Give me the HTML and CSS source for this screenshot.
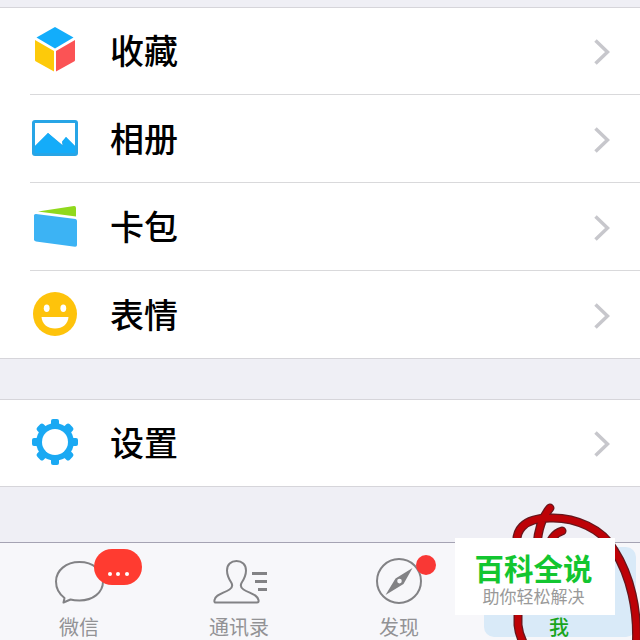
FILE: index.html
```html
<!DOCTYPE html>
<html lang="zh-CN">
<head>
<meta charset="utf-8">
<title>我</title>
<link rel="stylesheet" href="styles.css">
</head>
<body>
<main class="screen">
  <section class="group">
    <div class="row">
      <svg class="icon" viewBox="0 0 50 50"><path fill="#12adfb" d="M25 2 43.500 12.500 25 23.500 6.500 12.500Z"/><path fill="#fdca0a" d="M5 15 24 26V46.500L6 36.500Q5 36 5 35Z"/><path fill="#fb5355" d="M45 15 26 26V46.500L44 36.500Q45 36 45 35Z"/></svg>
      <span class="label">收藏</span>
      <svg class="chevron" viewBox="0 0 16 26"><path d="M1.500 1.500 13.500 13 1.500 24.500"/></svg>
    </div>
    <div class="row">
      <svg class="icon" viewBox="0 0 50 50"><rect x="2" y="7" width="46" height="36" rx="3" fill="#27a5e6"/><path fill="#fff" d="M5 10H45V33L36 24 32 29.500 32.500 32 18 20 5 33Z"/><path fill="#14acf9" d="M5 33 18 20 32 32.500 32.500 34 33.500 31 32 28.500 36 24 45 33V40H5Z"/></svg>
      <span class="label">相册</span>
      <svg class="chevron" viewBox="0 0 16 26"><path d="M1.500 1.500 13.500 13 1.500 24.500"/></svg>
    </div>
    <div class="row">
      <svg class="icon" viewBox="0 0 50 50"><path fill="#90d91c" d="M8 10.500 44 5Q46 4.800 46 7V15.500Z"/><path fill="#3cb3f4" d="M6 13 45.500 18Q47 18.300 47 20V44Q47 46 45 45.800L6 40.500Q4 40 4 38.500V14.500Q4 12.800 6 13Z"/></svg>
      <span class="label">卡包</span>
      <svg class="chevron" viewBox="0 0 16 26"><path d="M1.500 1.500 13.500 13 1.500 24.500"/></svg>
    </div>
    <div class="row">
      <svg class="icon" viewBox="0 0 50 50"><circle cx="25" cy="25" r="22" fill="#fec30b"/><ellipse cx="16.700" cy="19.300" rx="2.900" ry="3.700" fill="#fff"/><ellipse cx="33.300" cy="19.300" rx="2.900" ry="3.700" fill="#fff"/><path fill="#fff" d="M11.500 28H38.500C38 35 32.500 39.500 25 39.500S12 35 11.500 28Z"/></svg>
      <span class="label">表情</span>
      <svg class="chevron" viewBox="0 0 16 26"><path d="M1.500 1.500 13.500 13 1.500 24.500"/></svg>
    </div>
  </section>
  <section class="group">
    <div class="row">
      <svg class="icon" viewBox="0 0 50 50"><g fill="#1aa9f3"><rect x="21" y="2" width="8" height="46" rx="2"/><rect x="20.500" y="2" width="9" height="46" rx="2.500" transform="rotate(45 25 25)"/><rect x="21" y="2" width="8" height="46" rx="2" transform="rotate(90 25 25)"/><rect x="20.500" y="2" width="9" height="46" rx="2.500" transform="rotate(135 25 25)"/><circle cx="25" cy="25" r="18.800"/></g><circle cx="25" cy="25" r="13" fill="#fff"/></svg>
      <span class="label">设置</span>
      <svg class="chevron" viewBox="0 0 16 26"><path d="M1.500 1.500 13.500 13 1.500 24.500"/></svg>
    </div>
  </section>
  <nav class="tabs">
    <div class="tab">
      <svg class="tab-icon" viewBox="-1 0 60 60"><path d="M14.500 48Q6 41.500 6 31.500C6 20.500 16 12 29.500 12S53 20.500 53 31.500 43 50.500 29.500 50.500Q24 50.500 20.500 49.500L13.500 52.500Z"/></svg>
      <span class="tab-label">微信</span>
      <span class="badge"><i></i><i></i><i></i></span>
    </div>
    <div class="tab">
      <svg class="tab-icon" viewBox="-1 0 60 60"><path d="M5 52.500H47Q49 52.500 48.500 50C47.500 44.500 40 43.500 33.500 39.500Q29.500 37 31.500 33C34.500 28.500 36 25.500 36 20.500C36 14.500 32 11 26.500 11S17 14.500 17 20.500C17 25.500 18.500 28.500 21.500 33Q23.500 37 19.500 39.500C13 43.500 5.500 44.500 4.500 50Q4 52.500 5.500 52.500Z"/><path class="bars" d="M42 23.500H57M45 31.500H57M48 39.500H57"/></svg>
      <span class="tab-label">通讯录</span>
    </div>
    <div class="tab">
      <svg class="tab-icon" viewBox="-1 0 60 60"><circle cx="29" cy="31" r="22"/><path class="needle" fill-rule="evenodd" d="M42.500 18 33.500 34 15.500 45 25.500 28.500ZM29.500 28.800A2.300 2.300 0 1 0 29.500 33.400 2.300 2.300 0 1 0 29.500 28.800Z"/></svg>
      <span class="tab-label">发现</span>
      <span class="dot"></span>
    </div>
    <div class="tab tab-active">
      <span class="tab-label">我</span>
    </div>
  </nav>
  <svg class="scribble" viewBox="0 0 200 150">
    <path class="ink-edge" d="M97 55C98 42 102 27 110 18M108 61C109 50 115 43 122 41M78 60C73 40 84 28 110 28C135 27 163 39 174 60C190 85 199 120 196 160M78 110V135Q79 145 84 154"/>
    <path class="ink-fill" d="M97 55C98 42 102 27 110 18M108 61C109 50 115 43 122 41M78 60C73 40 84 28 110 28C135 27 163 39 174 60C190 85 199 120 196 160M78 110V135Q79 145 84 154"/>
  </svg>
  <aside class="watermark">
    <strong class="brand">百科全说</strong>
    <span class="slogan">助你轻松解决</span>
  </aside>
</main>
</body>
</html>
```

FILE: styles.css
```css
* { box-sizing: border-box; }
body { margin: 0; font-family: "Noto Sans CJK SC", sans-serif; }
.screen {
  position: relative;
  width: 640px;
  height: 640px;
  padding-top: 7px;
  overflow: hidden;
  background: #efeff5;
  display: flex;
  flex-direction: column;
}
.group {
  flex: none;
  background: #fff;
  border-top: 1px solid #d6d5da;
  border-bottom: 1px solid #d6d5da;
}
.group + .group { margin-top: 40px; }
.row {
  display: flex;
  align-items: center;
  height: 86px;
  margin-left: 30px;
  padding-right: 30px;
}
.row + .row { height: 88px; border-top: 1px solid #d9d9db; }
.icon { width: 50px; height: 50px; flex: none; margin-top: -2px; }
.label {
  flex: 1;
  margin: -2px 0 0 30px;
  font-size: 34px;
  line-height: 50px;
  font-weight: 500;
  color: #000;
}
.chevron { width: 16px; height: 26px; fill: none; stroke: #c7c7cc; stroke-width: 3.500; margin-top: 2px; }
.tabs {
  display: grid;
  grid-template-columns: repeat(4, 160px);
  flex: none;
  height: 98px;
  margin-top: auto;
  border-top: 1px solid #a5a3b3;
  background: #f7f7fa;
}
.tab {
  position: relative;
  display: flex;
  flex-direction: column;
  align-items: center;
  padding-right: 2px;
}
.tab-icon { width: 60px; height: 60px; margin-top: 7px; fill: none; stroke: #828285; stroke-width: 2; stroke-linejoin: round; }
.tab-icon .bars { stroke-width: 3; }
.tab-icon .needle { fill: #828285; stroke: none; }
.tab-label { font-size: 20px; line-height: 30px; margin-top: 2px; color: #929295; }
.badge {
  position: absolute;
  left: 94px;
  top: 6px;
  width: 48px;
  height: 36px;
  border-radius: 18px;
  background: #ff3b30;
  display: flex;
  justify-content: center;
  gap: 4.500px;
  padding-top: 23px;
}
.badge i { width: 4px; height: 4px; border-radius: 50%; background: #fff; }
.dot { position: absolute; left: 96px; top: 12px; width: 20px; height: 20px; border-radius: 50%; background: #f93835; }
.tab-active::before {
  content: "";
  position: absolute;
  left: 4px;
  top: 4px;
  width: 152px;
  height: 90px;
  border-radius: 10px;
  background: #d9eaf8;
}
.tab-active .tab-label { position: relative; margin-top: 69px; color: #19a51c; font-weight: 500; }
.scribble { position: absolute; left: 440px; top: 490px; width: 200px; height: 150px; fill: none; stroke-linecap: round; }
.ink-edge { stroke: #65171d; stroke-width: 9; }
.ink-fill { stroke: #bd0207; stroke-width: 6.500; }
.watermark {
  position: absolute;
  left: 455px;
  top: 538px;
  width: 160px;
  height: 77px;
  background: #fff;
  display: flex;
  flex-direction: column;
  align-items: center;
  padding: 11px 3px 0 0;
}
.brand { font-size: 29.500px; line-height: 36px; font-weight: 700; color: #13c630; }
.slogan { font-size: 17px; line-height: 20px; margin-top: 1px; color: #999; }
```
